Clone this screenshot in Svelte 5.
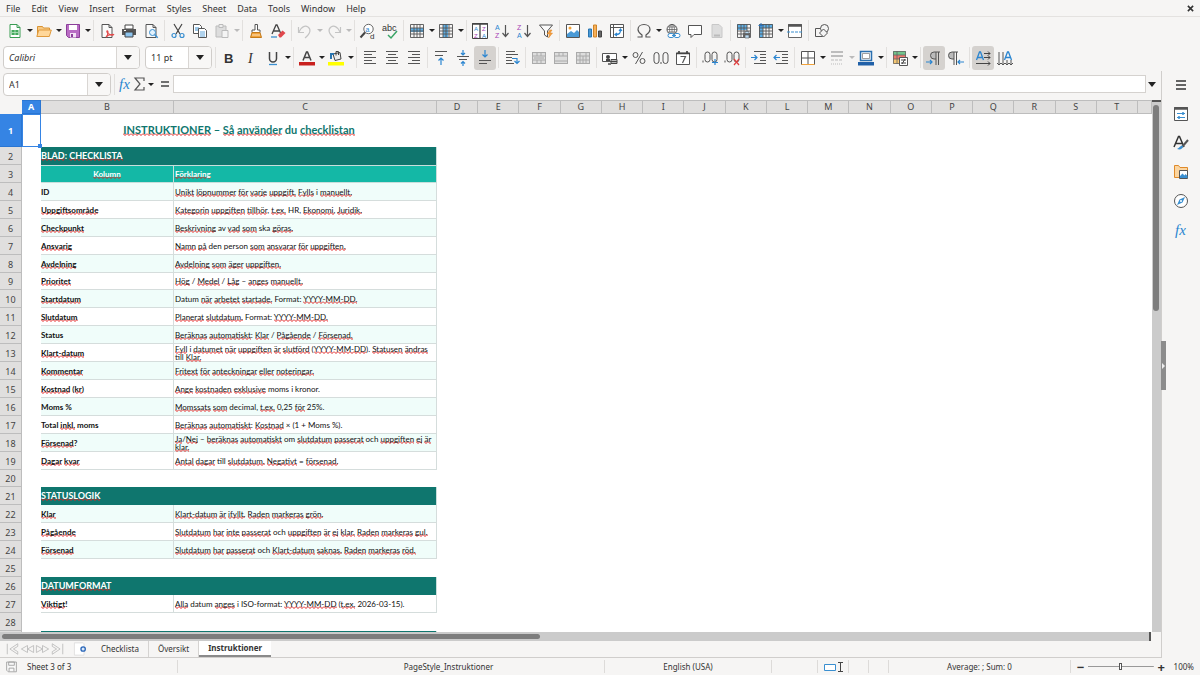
<script>
	const menus = ['File', 'Edit', 'View', 'Insert', 'Format', 'Styles', 'Sheet', 'Data', 'Tools', 'Window', 'Help'];

	const page = '<path d="M3 1.500h7l3 3v10H3z" fill="#fafafa" stroke="#555"/><path d="M10 1.500v3h3" fill="none" stroke="#555"/>';
	const grid = '<path d="M1.500 1.500h13v13h-13zM1.500 5h13M1.500 8h13M1.500 11h13M5 1.500v13M8 1.500v13M11 1.500v13" fill="none" stroke="#555" stroke-width=".9"/>';
	const mergeBase = '<rect x="1.500" y="2.500" width="13" height="11" fill="#ddd" stroke="#aaa"/>';
	const pilcrow = '<path d="M8 2a3.500 3.500 0 0 0 0 7h2V2z" fill="#bbb"/><path d="M14 2H8a3.500 3.500 0 0 0 0 7h2V2M10 9v6M12.500 2v13" fill="none" stroke="#555"/>';

	const icons = {
		new: '<path d="M3 1.500h7l3 3v10H3z" fill="#fff" stroke="#3a9c53"/><path d="M10 1.500v3h3" fill="none" stroke="#3a9c53"/><path d="M4.500 7h7v5h-7z" fill="#43aa5c"/><path d="M5 9.500h6M8 7v5" stroke="#c9edcf" stroke-width=".7"/>',
		open: '<path d="M1.500 13V3.500h5l1 1.500h6v2" fill="#f7c982" stroke="#d99333"/><path d="M.8 13.500l2-6.500h12.500l-2 6.500z" fill="#ffd79a" stroke="#e09a3d"/>',
		save: '<path d="M1.500 1.500h13v13h-11l-2-2z" fill="#b96cc4" stroke="#8b3f99"/><path d="M4 2h8v5H4z" fill="#fff"/><path d="M5 10h6v4.500H5z" fill="#f3e3f5"/><path d="M6 11h2v3H6z" fill="#8b3f99"/>',
		pdf: page + '<path d="M7 14c3-3 2-7 1-6s3 5 6 4-4-1-7 2" fill="none" stroke="#e24a4a" stroke-width="1.200"/>',
		print: '<path d="M4 2h8v4H4z" fill="#fff" stroke="#444"/><path d="M1 6h14v6H1z" fill="#555"/><path d="M4 9h8v5H4z" fill="#8dc4ee" stroke="#444"/><path d="M3 7.500h2" stroke="#fff"/>',
		preview: page + '<circle cx="9.500" cy="9.500" r="3" fill="#e3f2fd" stroke="#3a8fd0"/><path d="M11.700 11.700l3 3" stroke="#3a8fd0" stroke-width="1.500"/>',
		cut: '<path d="M4 1l6 10M12 1L6 11" stroke="#444" stroke-width="1.200"/><circle cx="4" cy="12.500" r="2" fill="none" stroke="#3a8fd0" stroke-width="1.200"/><circle cx="12" cy="12.500" r="2" fill="none" stroke="#3a8fd0" stroke-width="1.200"/>',
		copy: '<path d="M1.500 1.500h6l2 2v7h-8z" fill="#fff" stroke="#555"/><path d="M3 5h4M3 7h4" stroke="#3a8fd0"/><path d="M6.500 5.500h6l2 2v7h-8z" fill="#fff" stroke="#555"/><path d="M8 9h5M8 11h5M8 13h5" stroke="#3a8fd0" stroke-width=".8"/>',
		paste: '<path d="M2 3h10v11H2z" fill="#ddd" stroke="#bbb"/><path d="M5 1.500h4v3H5z" fill="#eee" stroke="#bbb"/><path d="M8 7.500h6v7H8z" fill="#f4f4f4" stroke="#bbb"/>',
		brush: '<path d="M7 1.500h2.500V7H12v2.500H4V7h3z" fill="#fff" stroke="#555"/><path d="M4 9.500h8l1.500 5h-11z" fill="#f2a33a" stroke="#c47a1a"/><path d="M4 12h8" stroke="#fff" stroke-width=".7"/>',
		clear: '<path d="M2 11L6 2h1l4 9M3.500 8h6" fill="none" stroke="#444" stroke-width="1.300"/><path d="M1 14h6" stroke="#3a8fd0" stroke-width="1.300"/><path d="M8 12l4.500-4.500 3 2.500-4.500 4.500h-1.500z" fill="#e0474c"/>',
		undo: '<path d="M1.500 4v5.500h5.500M2 9c2-5 6-7 9-5s3 6-3 11" fill="none" stroke="#c4c4c4" stroke-width="1.200"/>',
		redo: '<path d="M14.500 4v5.500H9M14 9c-2-5-6-7-9-5s-3 6 3 11" fill="none" stroke="#c4c4c4" stroke-width="1.200"/>',
		find: '<circle cx="8.500" cy="6" r="4.700" fill="#fff" stroke="#666"/><path d="M5 9.500l-4.500 5" stroke="#444" stroke-width="2"/><text x="5.500" y="8.500" font-size="7" fill="#2a85d0">a</text><text x="10" y="15.500" font-size="8" fill="#333">d</text>',
		spell: '<text x="0" y="8" font-size="9" fill="#333">abc</text><path d="M6 12l3 3 6-7" fill="none" stroke="#3aa566" stroke-width="1.500"/>',
		row: '<path d="M1 5h14v4H1z" fill="#5eafe6"/>' + grid,
		col: '<path d="M5 1h5v14H5z" fill="#5eafe6"/>' + grid,
		autofilter: '<path d="M.5 .5h15v15H.5z" fill="#fff" stroke="#444"/><path d="M0 1h16M8 1v14" stroke="#444" stroke-width="1.300"/><text x="2" y="8" font-size="6" fill="#2a85d0">A</text><text x="10" y="8" font-size="6" fill="#a63fb5">Z</text><text x="2" y="15" font-size="6" fill="#a63fb5">Z</text><text x="10" y="15" font-size="6" fill="#2a85d0">A</text>',
		asc: '<text x="1" y="7" font-size="7" fill="#2a85d0">A</text><text x="1" y="15" font-size="7" fill="#a63fb5">Z</text><path d="M11.500 2v11M8.500 10l3 3.500 3-3.500" fill="none" stroke="#555" stroke-width="1.200"/>',
		desc: '<text x="1" y="7" font-size="7" fill="#a63fb5">Z</text><text x="1" y="15" font-size="7" fill="#2a85d0">A</text><path d="M11.500 2v11M8.500 10l3 3.500 3-3.500" fill="none" stroke="#555" stroke-width="1.200"/>',
		filter: '<path d="M1.500 2h13L9.500 8v6l-3-2V8z" fill="#fafafa" stroke="#555"/><path d="M12 7l-3 4h2.500l-1 4 4-5H12l2-3z" fill="#f5a040" stroke="#dd8020" stroke-width=".5"/>',
		image: '<path d="M1.500 1.500h13v13h-13z" fill="#fff" stroke="#555"/><path d="M2 14v-3l4-3 3 2 3-3 2 2v5z" fill="#4a9ad6"/><circle cx="5" cy="5" r="1.500" fill="#f2a33a"/>',
		chart: '<path d="M1.500 6h3v8h-3z" fill="#4a9ad6" stroke="#2a75b0"/><path d="M6.500 2h3v12h-3z" fill="#f6b05a" stroke="#cf8427"/><path d="M11.500 8h3v6h-3z" fill="#666" stroke="#444"/>',
		pivot: '<path d="M1.500 1.500h13v13h-13zM1.500 4.500h13M4.500 1.500v13" fill="#fff" stroke="#555"/><path d="M6.500 11.500c4 0 5-1 5-5M10 8l1.500-2L13 8M8 10l-2 1.500L8 13" fill="none" stroke="#2a85d0" stroke-width="1.200"/>',
		omega: '<path d="M1.500 14H6v-2C3 10 2 8.500 2 6.500 2 3.500 4.500 1.500 8 1.500s6 2 6 5c0 2-1 3.500-4 5.500v2h4.500" fill="none" stroke="#555" stroke-width="1.200"/>',
		link: '<circle cx="7" cy="6.500" r="5" fill="#fff" stroke="#555"/><path d="M2 6.500h10M7 1.500v10M3 4h8M3 9h8" stroke="#555" stroke-width=".7"/><ellipse cx="7" cy="6.500" rx="2.400" ry="5" fill="none" stroke="#555" stroke-width=".7"/><rect x="3" y="10.500" width="6" height="4" rx="2" fill="#fff" stroke="#3a8fd0"/><rect x="9" y="10.500" width="6" height="4" rx="2" fill="#fff" stroke="#3a8fd0"/><path d="M7 12.500h4" stroke="#3a8fd0"/>',
		comment: '<path d="M1.500 2.500h13v9H7L4 14.500v-3H1.500z" fill="#fff" stroke="#555"/>',
		header: '<path d="M3 1.500h7l3 3v10H3z" fill="#ddd" stroke="#c8c8c8"/><path d="M5 12.500h6" stroke="#bbb" stroke-width="2"/>',
		printArea: '<path d="M1 1h10v6H1z" fill="#5eafe6"/>' + grid + '<path d="M7 10h8v4H7z" fill="#666"/><path d="M9 8.500h4v2H9zM9 12h4v3H9z" fill="#bcdcf4" stroke="#555" stroke-width=".6"/>',
		freeze: '<path d="M1 1h14v4H5v10H1z" fill="#5eafe6"/>' + grid + '<path d="M3 0v5M.5 2.500h5" stroke="#2a75c0"/>',
		split: '<path d="M1.500 1.500h13v13h-13z" fill="#fff" stroke="#666"/><path d="M1 2.500h14" stroke="#555" stroke-width="2.500"/><path d="M0 9h16" stroke="#3a8fd0" stroke-dasharray="3 1"/>',
		shapes: '<path d="M1.500 5.500h7v8h-7z" fill="none" stroke="#555"/><circle cx="10.500" cy="5.500" r="4" fill="#f4f4f4" stroke="#555"/><path d="M9.500 6l4 4-4 4-4-4z" fill="#f4f4f4" stroke="#555"/>',
		bold: '<text x="3" y="13" font-size="13" font-weight="700" fill="#333">B</text>',
		italic: '<text x="5" y="13" font-size="14" font-style="italic" font-family="Liberation Serif" fill="#333">I</text>',
		underline: '<path d="M4.500 2v6.500a3.500 3.500 0 0 0 7 0V2" fill="none" stroke="#444" stroke-width="1.500"/><path d="M4 14.500h8" stroke="#3a8fd0" stroke-width="1.300"/>',
		fontColor: '<path d="M4 10.500L7.500 2h1l3.500 8.500M5.500 7.500h5" fill="none" stroke="#444" stroke-width="1.500"/><path d="M0 12h16v3.500H0z" fill="#c9211e"/>',
		fill: '<path d="M5 4l7-1.500 1 6.500-6 1.500z" fill="#eee" stroke="#444"/><path d="M8 5.500V1.500h2.500V5" fill="none" stroke="#444"/><path d="M3 9V4h3" fill="none" stroke="#2a75b0" stroke-width="2"/><path d="M0 12h16v3.500H0z" fill="#ff0"/>',
		left: '<path d="M2 1.500h12M2 4.500h8M2 7.500h12M2 10.500h8M2 13.500h12" stroke="#555"/>',
		center: '<path d="M2 1.500h12M4 4.500h8M2 7.500h12M4 10.500h8M2 13.500h12" stroke="#555"/>',
		right: '<path d="M2 1.500h12M6 4.500h8M2 7.500h12M6 10.500h8M2 13.500h12" stroke="#555"/>',
		top: '<path d="M2 1.500h12M2 5.500h8" stroke="#555"/><path d="M8 15V8M5.500 10.500L8 8l2.500 2.500" fill="none" stroke="#2a85d0" stroke-width="1.200"/>',
		middle: '<path d="M2 6.500h12M4 9.500h8" stroke="#555"/><path d="M8 0v5M6 3l2 2 2-2M8 16v-4.500M6 13.500l2-2 2 2" fill="none" stroke="#2a85d0" stroke-width="1.200"/>',
		bottom: '<path d="M2 10.500h12M2 13.500h8" stroke="#555"/><path d="M8 0v7M5.500 4.500L8 7l2.500-2.500" fill="none" stroke="#2a85d0" stroke-width="1.200"/>',
		wrap: '<path d="M2 1.500h9M2 4.500h12M2 7.500h6M2 10.500h6M2 13.500h8" stroke="#555"/><path d="M8 8.500h5v4M10.500 11l2.500 2.500 2.500-2.500" fill="none" stroke="#2a85d0" stroke-width="1.200"/>',
		merge: mergeBase + '<path d="M1 6h14M1 10h14M6 2v4M10 2v4M6 10v4M10 10v4M3 8h10" stroke="#aaa"/>',
		mergeCells: mergeBase + '<path d="M1 6h14M1 11h14M6 2v4M10 2v4" stroke="#aaa"/>',
		unmerge: mergeBase + '<path d="M1 6h14M1 10h14M5 2v12M8 6v8M11 2v12" stroke="#aaa"/>',
		currency: '<path d="M.5 3.500h14v8H.5z" fill="#fff" stroke="#555"/><circle cx="6" cy="7" r="2" fill="#444"/><path d="M4 11v-2h4v2z" fill="#444"/><path d="M9 9.500h6v4H9z" fill="#bbb" stroke="#444"/><path d="M9 11.500h6" stroke="#444"/><path d="M6 14h3" stroke="#777" stroke-width="2"/>',
		percent: '<circle cx="4.500" cy="5" r="2.500" fill="none" stroke="#555"/><circle cx="11.500" cy="11" r="2.500" fill="none" stroke="#555"/><path d="M11.500 2l-7 12" stroke="#555"/>',
		number: '<rect x="1" y="2.500" width="5" height="11" rx="2.500" fill="none" stroke="#555"/><rect x="10" y="2.500" width="5" height="11" rx="2.500" fill="none" stroke="#555"/><path d="M8 12v2" stroke="#555"/>',
		date: '<path d="M1.500 3h13v11.500h-13z" fill="#fff" stroke="#555"/><path d="M1 3.500h14M4 1v3M12 1v3" stroke="#444" stroke-width="1.700"/><path d="M5.500 6.500h5L7.500 13" fill="none" stroke="#555" stroke-width="1.200"/>',
		addDec: '<rect x="3" y="2" width="5" height="10" rx="2.500" fill="none" stroke="#555"/><rect x="10" y="2" width="5" height="10" rx="2.500" fill="none" stroke="#555"/><path d="M1 10.500v2" stroke="#555"/><path d="M13 9v6M10 12.500h6" stroke="#2a85d0" stroke-width="1.200"/>',
		delDec: '<rect x="3" y="2" width="5" height="10" rx="2.500" fill="none" stroke="#555"/><rect x="10" y="2" width="5" height="10" rx="2.500" fill="none" stroke="#555"/><path d="M1 10.500v2" stroke="#555"/><path d="M10 9l5 6M15 9l-5 6" stroke="#e04040" stroke-width="1.200"/>',
		indent: '<path d="M3 1.500h12M9 4.500h6M9 7.500h6M9 10.500h6M3 13.500h12" stroke="#555"/><path d="M0 7.500h6M3.500 5L6 7.500 3.500 10" fill="none" stroke="#2a85d0" stroke-width="1.200"/>',
		outdent: '<path d="M3 1.500h12M9 4.500h6M9 7.500h6M9 10.500h6M3 13.500h12" stroke="#555"/><path d="M7 7.500H1M3.500 5L1 7.500 3.500 10" fill="none" stroke="#2a85d0" stroke-width="1.200"/>',
		borders: '<path d="M1.500 1.500h13v13h-13z" fill="#fff" stroke="#555"/><path d="M8 1.500v13M1.500 8h13" stroke="#555"/><path d="M1.500 14.500h13" stroke="#f2a33a"/>',
		lineStyle: '<path d="M2 2h12M2 6h12" stroke="#aaa" stroke-width="1.500"/><path d="M2 10h12" stroke="#bbb" stroke-dasharray="3 1"/><path d="M2 14h12" stroke="#bbb" stroke-dasharray="1 1"/>',
		borderColor: '<path d="M2.500 1.500h11v9h-11z" fill="#f4f8fc" stroke="#2a6fae" stroke-width="1.500"/><path d="M4.500 3.500h7v5h-7z" fill="#fff" stroke="#777" stroke-width=".7"/><path d="M0 12h16v3.500H0z" fill="#2060a8"/>',
		conditional: '<path d="M1 1h13v4H1z" fill="#72c48c"/><path d="M1 5h13v4H1z" fill="#ef7a6e"/><path d="M1 9h13v5H1z" fill="#f7c873"/><path d="M1.500 1.500h12v12h-12zM1 5h13M1 9h13M5 1v13" fill="none" stroke="#666" stroke-width=".8"/><path d="M7.500 7.500h8v8h-8z" fill="#fff" stroke="#555"/><path d="M9 10h5M9 13h5M13 9l-3 5" stroke="#444"/>',
		ltr: pilcrow + '<path d="M0 12h6M4 10l2 2-2 2" fill="none" stroke="#2a85d0" stroke-width="1.200"/>',
		rtl: '<g transform="translate(-4)">' + pilcrow + '</g><path d="M16 12h-6M12 10l-2 2 2 2" fill="none" stroke="#2a85d0" stroke-width="1.200"/>',
		horizontal: '<path d="M1.500 10L4.500 2h1l3 8M2.500 7.500h5" fill="none" stroke="#2a85d0" stroke-width="1.300"/><path d="M9 3.500h6M9 7.500h6M1 13.500h14M13 1.500l2 2-2 2M13 5.500l2 2-2 2M13 11.500l2 2-2 2" fill="none" stroke="#444"/>',
		vertical: '<path d="M7.500 10L10.500 2h1l3 8M8.500 7.500h5" fill="none" stroke="#2a85d0" stroke-width="1.300"/><path d="M2 2v13M6 2v13M10 10v5M14 10v5M0 13l2 2 2-2M4 13l2 2 2-2M8 13l2 2 2-2M12 13l2 2 2-2" fill="none" stroke="#555"/>',
		fx: '<text x="2" y="13" font-size="15" font-style="italic" font-family="Liberation Serif" fill="#2a85d0">fx</text>',
		sum: '<path d="M12 5V2H3l5 6-5 6h9v-3" fill="none" stroke="#555" stroke-width="1.200"/>',
		equals: '<path d="M4 6h8M4 10h8" stroke="#444" stroke-width="1.700"/>',
		menu: '<path d="M3 4h10M3 8h10M3 12h10" stroke="#333" stroke-width="1.500"/>',
		properties: '<path d="M1.500 1.500h13v13h-13z" fill="#fff" stroke="#555"/><path d="M1 2.500h14" stroke="#555" stroke-width="2.500"/><path d="M4 7.500h8M4 11.500h8" stroke="#3a8fd0"/><path d="M10 6v3M6 10v3" stroke="#3a8fd0" stroke-width="1.500"/>',
		styles: '<path d="M1 12L5.500 1.500h1L11 12M2.500 8.500h7" fill="none" stroke="#333" stroke-width="1.500"/><path d="M15 5l-6 7" stroke="#555" stroke-width="2"/><path d="M4 14c3 1 6 0 6-3-3-1-3 2-6 3z" fill="#3a8fd0"/>',
		gallery: '<path d="M1.500 13.500v-12h4l1.500 2h7.500v10z" fill="#fbd5a0" stroke="#df8a2a"/><path d="M6.500 6.500h8v8h-8z" fill="#fff" stroke="#555"/><path d="M7 14v-2l2.500-2.500 2 2 1-1.500 2 2v2z" fill="#3a8fd0"/>',
		navigator: '<circle cx="8" cy="8" r="6.500" fill="#fff" stroke="#555"/><path d="M12 4l-2.500 5.500L4 12l2.500-5.500z" fill="#3a8fd0"/><circle cx="8" cy="8" r="1" fill="#fff"/>',
		first: '<path d="M2 2v12M14 2L5 8l9 6v-3L9 8l5-3z" fill="none" stroke="#bbb"/>',
		prev: '<path d="M8 4L1 8l7 4zM15 4L8 8l7 4z" fill="none" stroke="#bbb"/>',
		next: '<path d="M8 4l7 4-7 4zM1 4l7 4-7 4z" fill="none" stroke="#bbb"/>',
		last: '<path d="M14 2v12M2 2l9 6-9 6v-3l5-3-5-3z" fill="none" stroke="#bbb"/>',
		addSheet: '<path d="M1 1h10l1 1v13H1z" fill="#fff" stroke="#ddd"/><circle cx="11" cy="8" r="2.500" fill="#dce9fa" stroke="#2a66b8" stroke-width="1.500"/>',
		saved: '<path d="M2 2.500h12v12H4l-2-2z" fill="#f8f8f8" stroke="#999"/><path d="M4.500 2.500h7v4h-7zM5 14v-4h6v4" fill="none" stroke="#999"/>'
	};

	// "|" is a separator, a trailing "+" adds a drop-down arrow
	const standardBar =
		'new+ open+ save+ | pdf print preview | cut copy paste+ | brush clear | undo+ redo+ | find spell | row+ col+ | autofilter asc desc filter | image chart pivot | omega+ link comment header | printArea freeze+ split | shapes'.split(' ');
	const formatBar =
		'| bold italic underline+ | fontColor+ fill+ | left center right | top middle bottom | wrap | merge mergeCells unmerge | currency+ percent number date | addDec delDec | indent outdent | borders+ lineStyle+ borderColor+ | conditional+ | ltr rtl | horizontal vertical'.split(' ');
	const pressed = ['bottom', 'ltr', 'horizontal'];
	const disabled = ['paste', 'undo', 'redo', 'header', 'lineStyle', 'merge', 'mergeCells', 'unmerge'];
	const panels = ['menu', 'properties', 'styles', 'gallery', 'navigator', 'fx'];

	const columns = 'DEFGHIJKLMNOPQRST'.split('');

	const rows = [
		{ kind: 'title', b: 'INSTRUKTIONER – Så använder du checklistan', height: 33 },
		{ kind: 'section', b: 'BLAD: CHECKLISTA' },
		{ kind: 'head', b: 'Kolumn', c: 'Förklaring' },
		{ kind: 'data', b: 'ID', c: 'Unikt löpnummer för varje uppgift. Fylls i manuellt.', tint: true },
		{ kind: 'data', b: 'Uppgiftsområde', c: 'Kategorin uppgiften tillhör, t.ex. HR, Ekonomi, Juridik.' },
		{ kind: 'data', b: 'Checkpunkt', c: 'Beskrivning av vad som ska göras.', tint: true },
		{ kind: 'data', b: 'Ansvarig', c: 'Namn på den person som ansvarar för uppgiften.' },
		{ kind: 'data', b: 'Avdelning', c: 'Avdelning som äger uppgiften.', tint: true },
		{ kind: 'data', b: 'Prioritet', c: 'Hög / Medel / Låg – anges manuellt.', height: 17 },
		{ kind: 'data', b: 'Startdatum', c: 'Datum när arbetet startade. Format: YYYY-MM-DD.', tint: true },
		{ kind: 'data', b: 'Slutdatum', c: 'Planerat slutdatum. Format: YYYY-MM-DD.' },
		{ kind: 'data', b: 'Status', c: 'Beräknas automatiskt: Klar / Pågående / Försenad.', tint: true },
		{ kind: 'data', b: 'Klart-datum', c: 'Fyll i datumet när uppgiften är slutförd (YYYY-MM-DD). Statusen ändras till Klar.' },
		{ kind: 'data', b: 'Kommentar', c: 'Fritext för anteckningar eller noteringar.', tint: true },
		{ kind: 'data', b: 'Kostnad (kr)', c: 'Ange kostnaden exklusive moms i kronor.' },
		{ kind: 'data', b: 'Moms %', c: 'Momssats som decimal, t.ex. 0,25 för 25%.', tint: true },
		{ kind: 'data', b: 'Total inkl. moms', c: 'Beräknas automatiskt: Kostnad × (1 + Moms %).' },
		{ kind: 'data', b: 'Försenad?', c: 'Ja/Nej – beräknas automatiskt om slutdatum passerat och uppgiften ej är klar.', tint: true },
		{ kind: 'data', b: 'Dagar kvar', c: 'Antal dagar till slutdatum. Negativt = försenad.' },
		{ kind: 'blank', height: 17 },
		{ kind: 'section', b: 'STATUSLOGIK' },
		{ kind: 'data', b: 'Klar', c: 'Klart-datum är ifyllt. Raden markeras grön.', tint: true },
		{ kind: 'data', b: 'Pågående', c: 'Slutdatum har inte passerat och uppgiften är ej klar. Raden markeras gul.' },
		{ kind: 'data', b: 'Försenad', c: 'Slutdatum har passerat och Klart-datum saknas. Raden markeras röd.', tint: true },
		{ kind: 'blank' },
		{ kind: 'section', b: 'DATUMFORMAT' },
		{ kind: 'data', b: 'Viktigt!', c: 'Alla datum anges i ISO-format: YYYY-MM-DD (t.ex. 2026-03-15).' },
		{ kind: 'blank' },
		{ kind: 'section', b: '', partial: true }
	];

	// words the spell checker accepts
	const known = 'id hr i av ska den person datum format status till moms decimal total och om kronor du iso-format'.split(' ');

	function spell(text) {
		return text
			.split(/(\p{L}[\p{L}.-]*)/u)
			.filter((t) => t !== '')
			.map((t) => ({
				text: t,
				bad: /^\p{L}/u.test(t) && !known.includes(t.toLowerCase().replace(/\.$/, ''))
			}));
	}

	let font = $state('Calibri');
	let size = $state('11 pt');
	let cell = $state('A1');
	let formula = $state('');
	let zoom = $state(50);
	let sheet = $state('Instruktioner');
</script>

{#snippet icon(name)}
	<svg class="icon" viewBox="0 0 16 16" aria-hidden="true">{@html icons[name]}</svg>
{/snippet}

{#snippet tools(items)}
	{#each items as item}
		{#if item === '|'}
			<span class="sep"></span>
		{:else}
			{@const name = item.replace('+', '')}
			<button class="tool" class:pressed={pressed.includes(name)} aria-label={name} disabled={disabled.includes(name)}>
				{@render icon(name)}
			</button>
			{#if item.endsWith('+')}
				<button class="caret" aria-label="{name} options" disabled={disabled.includes(name)}></button>
			{/if}
		{/if}
	{/each}
{/snippet}

{#snippet words(text)}
	{#each spell(text) as w}{#if w.bad}<span class="bad">{w.text}</span>{:else}{w.text}{/if}{/each}
{/snippet}

<div class="app">
	<nav class="menubar">
		{#each menus as m}
			<button>{m}</button>
		{/each}
		<button class="close" aria-label="Close document">
			<svg viewBox="0 0 8 8"><path d="M1 1l6 6M7 1L1 7" stroke="#333" stroke-width="1.8" /></svg>
		</button>
	</nav>

	<div class="toolbar">{@render tools(standardBar)}</div>

	<div class="toolbar format">
		<div class="combo font">
			<input aria-label="Font name" bind:value={font} />
			<button aria-label="Font list"></button>
		</div>
		<div class="combo size">
			<input aria-label="Font size" bind:value={size} />
			<button aria-label="Size list"></button>
		</div>
		{@render tools(formatBar)}
	</div>

	<div class="main">
		<div class="work">
			<div class="formula-bar">
				<div class="combo name">
					<input aria-label="Name box" bind:value={cell} />
					<button aria-label="Named ranges"></button>
				</div>
				<span class="sep"></span>
				<button class="small" aria-label="Function wizard">{@render icon('fx')}</button>
				<button class="small" aria-label="Sum">{@render icon('sum')}</button>
				<button class="caret" aria-label="Sum options"></button>
				<button class="small" aria-label="Formula">{@render icon('equals')}</button>
				<input class="formula" aria-label="Input line" bind:value={formula} />
				<button class="expand" aria-label="Expand formula bar"></button>
			</div>

			<div class="sheet">
				<div class="cells">
					<table>
						<colgroup>
							<col class="w-num" /><col class="w-a" /><col class="w-b" /><col class="w-c" />
							{#each columns as c}<col />{/each}
							<col class="w-last" />
						</colgroup>
						<thead>
							<tr>
								<th class="corner"></th>
								<th class="sel">A</th>
								<th>B</th>
								<th>C</th>
								{#each columns as c}<th>{c}</th>{/each}
								<th></th>
							</tr>
						</thead>
						<tbody>
							{#each rows as r, i}
								<tr class={r.kind} class:tint={r.tint} style:height="{r.height ?? 18}px">
									<th class:sel={i === 0}>{r.partial ? '' : i + 1}</th>
									<td class:cursor={i === 0}></td>
									{#if r.kind === 'title' || r.kind === 'section'}
										<td class="b" colspan="2">{@render words(r.b)}</td>
									{:else if r.kind === 'blank'}
										<td></td><td></td>
									{:else}
										<td class="b">{@render words(r.b)}</td>
										<td class="c">{@render words(r.c)}</td>
									{/if}
									<td colspan="18"></td>
								</tr>
							{/each}
						</tbody>
					</table>
				</div>
				<div class="vscroll"><div class="thumb"></div></div>
			</div>

			<div class="hscroll">
				<div class="track"><div class="thumb"></div></div>
			</div>

			<div class="tabs">
				<div class="nav">
					{#each ['first', 'prev', 'next', 'last'] as n}
						<button aria-label="{n} sheet" disabled>{@render icon(n)}</button>
					{/each}
				</div>
				<button class="add" aria-label="Add sheet">{@render icon('addSheet')}</button>
				{#each ['Checklista', 'Översikt', 'Instruktioner'] as name}
					<button class="tab" class:active={sheet === name} onclick={() => (sheet = name)}>{name}</button>
				{/each}
			</div>
		</div>

		<aside class="sidebar">
			<div class="grip"></div>
			{#each panels as p}
				<button aria-label={p}>{@render icon(p)}</button>
			{/each}
		</aside>
	</div>

	<footer class="status">
		<div class="doc">{@render icon('saved')}<span>Sheet 3 of 3</span></div>
		<div class="style">PageStyle_Instruktioner</div>
		<div>English (USA)</div>
		<div></div>
		<div>
			<svg viewBox="0 0 22 12" width="22" height="12">
				<path d="M2.5 3.500h11v6h-11z" fill="#fff" stroke="#3a8fd0" />
				<path d="M16 1.500h5M18.500 1.500v9M16 10.500h5" stroke="#444" />
			</svg>
		</div>
		<div></div>
		<div></div>
		<div>Average: ; Sum: 0</div>
		<div class="zoom">
			<button aria-label="Zoom out">−</button>
			<input type="range" aria-label="Zoom" min="0" max="100" bind:value={zoom} />
			<button aria-label="Zoom in">+</button>
			<span class="percent">100%</span>
		</div>
	</footer>
</div>

<style>
	:global(body) {
		margin: 0;
	}
	.app {
		display: flex;
		flex-direction: column;
		height: 100vh;
		overflow: hidden;
		background: #f6f5f4;
		color: #333;
		font: 9px 'Noto Sans', sans-serif;
	}
	button {
		margin: 0;
		padding: 0;
		border: 0;
		background: none;
		color: inherit;
		font: inherit;
	}
	input {
		min-width: 0;
		box-sizing: border-box;
		font: inherit;
		color: inherit;
	}
	.icon {
		display: block;
		flex: none;
		width: 16px;
		height: 16px;
		overflow: visible;
		font-family: 'Liberation Sans', sans-serif;
	}

	.menubar {
		display: flex;
		align-items: center;
		gap: 11px;
		height: 16px;
		padding: 0 6px;
		border-bottom: 1px solid #e4e2e0;
	}
	.close {
		margin-left: auto;
	}
	.close svg {
		display: block;
		width: 7px;
		height: 7px;
	}

	.toolbar {
		display: flex;
		align-items: center;
		height: 27px;
		padding-left: 4px;
	}
	.tool {
		display: flex;
		align-items: center;
		justify-content: center;
		flex: none;
		width: 22px;
		height: 24px;
		border-radius: 3px;
	}
	.tool.pressed {
		background: #d5d2cf;
	}
	.sep {
		flex: none;
		width: 1px;
		height: 21px;
		margin: 0 2px;
		background: #e2e0de;
	}
	.caret {
		flex: none;
		width: 7px;
		height: 22px;
	}
	.caret::before,
	.expand::before,
	.combo button::before {
		content: '';
		display: block;
		width: 0;
		margin: 0 auto;
		border: 3px solid transparent;
		border-top-color: #222;
		border-bottom: 0;
	}
	.caret:disabled::before {
		border-top-color: #bbb;
	}
	.expand::before,
	.combo button::before {
		border-width: 5px 4px 0;
	}
	.format {
		padding-left: 3px;
	}
	.combo {
		display: flex;
		flex: none;
		box-sizing: border-box;
		height: 23px;
		overflow: hidden;
		border: 1px solid #d0cdca;
		border-radius: 4px;
		background: #fff;
	}
	.combo input {
		flex: 1;
		border: 0;
		padding: 0 5px;
		background: none;
	}
	.combo button {
		width: 23px;
		border-left: 1px solid #d9d6d3;
		background: #f8f7f6;
	}
	.font {
		width: 137px;
		margin-right: 5px;
	}
	.font input {
		font-style: italic;
	}
	.size {
		width: 67px;
		margin-right: 1px;
	}
	.name {
		width: 108px;
	}

	.main {
		display: flex;
		flex: 1;
		min-height: 0;
	}
	.work {
		display: flex;
		flex: 1;
		flex-direction: column;
		min-width: 0;
	}
	.formula-bar {
		display: flex;
		align-items: center;
		height: 24px;
		padding: 1px 4px 4px 3px;
	}
	.formula-bar .sep {
		margin: 0 2px 0 3px;
	}
	.small {
		display: flex;
		justify-content: center;
		width: 15px;
	}
	.caret + .small {
		margin: 0 1px 0 3px;
	}
	.formula {
		flex: 1;
		height: 18px;
		border: 1px solid #d5d2cf;
		background: #fff;
	}
	.expand {
		width: 11px;
	}

	.sheet {
		display: flex;
		flex: 1;
		min-height: 0;
	}
	.cells {
		flex: 1;
		min-width: 0;
		overflow: hidden;
		background: #fff;
	}
	table {
		width: 100%;
		table-layout: fixed;
		border-collapse: separate;
		border-spacing: 0;
	}
	.w-num {
		width: 22px;
	}
	.w-a {
		width: 19px;
	}
	.w-b {
		width: 133px;
	}
	.w-c {
		width: 263px;
	}
	.w-last {
		width: 14px;
	}
	th,
	td {
		box-sizing: border-box;
		padding: 0;
		line-height: 8px;
	}
	th {
		border: solid #bdbdbd;
		border-width: 0 1px 1px 0;
		background: #e0dfde;
		color: #444;
		font-weight: 400;
	}
	tbody th {
		padding-top: 2px;
	}
	thead th {
		height: 14px;
		border-top: 1px solid #bdbdbd;
	}
	th.corner {
		border: 0;
		background: #f6f5f4;
	}
	th.sel {
		border-color: #2a76d2;
		background: #3584e4;
		color: #fff;
		font-weight: 700;
	}
	td {
		color: #111;
		font-family: Lato, sans-serif;
		font-size: 8px;
	}
	.cursor {
		position: relative;
		border: 1px solid #3584e4;
	}
	.cursor::after {
		content: '';
		position: absolute;
		right: -2px;
		bottom: -2px;
		width: 4px;
		height: 4px;
		background: #3584e4;
	}
	.title .b {
		padding-bottom: 2px;
		color: #0f766e;
		font-size: 11px;
		font-weight: 700;
		line-height: 14px;
		text-align: center;
	}
	.section .b {
		border-right: 1px solid #c8dedb;
		background: #0f766e;
		color: #fff;
		font-size: 9px;
		font-weight: 700;
	}
	.head .b,
	.head .c {
		border: solid #c8dedb;
		border-width: 1px 1px 1px 0;
		background: #14b8a6;
		color: #fff;
		font-weight: 700;
	}
	.head .b {
		text-align: center;
	}
	.head .c,
	.data .c {
		padding-left: 1px;
	}
	.data .b,
	.data .c {
		border: solid #d5dddc;
		border-width: 0 1px 1px 0;
	}
	.data .b {
		font-weight: 700;
	}
	.tint .b,
	.tint .c {
		background: #f0fdfa;
	}
	.bad {
		background: url("data:image/svg+xml,%3Csvg xmlns='http://www.w3.org/2000/svg' width='4' height='3'%3E%3Cpath d='M0 .5l2 2 2-2' fill='none' stroke='%23e02020'/%3E%3C/svg%3E") left bottom / 4px 3px repeat-x;
	}

	.vscroll {
		width: 9px;
		padding: 3px 1px 0;
		background: #cbcbcb;
		border-top: 2px solid #555;
		box-sizing: border-box;
	}
	.vscroll .thumb {
		width: 6px;
		height: 39%;
		border-radius: 3px;
		background: #7d7d7d;
	}
	.hscroll {
		display: flex;
		height: 9px;
		padding-right: 10px;
	}
	.track {
		flex: 1;
		padding: 2px;
		border-right: 2px solid #555;
		background: #cbcbcb;
		box-sizing: border-box;
	}
	.hscroll .thumb {
		width: 47%;
		height: 5px;
		border-radius: 3px;
		background: #7d7d7d;
	}

	.tabs {
		display: flex;
		align-items: stretch;
		height: 16px;
		border-bottom: 1px solid #d0cecc;
		font-size: 8px;
	}
	.nav {
		display: flex;
		align-items: center;
		width: 73px;
		padding-left: 5px;
		box-sizing: border-box;
	}
	.nav .icon,
	.add .icon {
		width: 15px;
		height: 14px;
	}
	.add {
		width: 19px;
	}
	.tab {
		padding: 0 9px 1px;
		border-right: 1px solid #d5d3d1;
		line-height: 14px;
	}
	.tab.active {
		padding-bottom: 0;
		border-right: 0;
		border-bottom: 2px solid #8a8a8a;
		background: #fff;
		font-weight: 700;
	}

	.sidebar {
		position: relative;
		display: flex;
		flex-direction: column;
		align-items: center;
		gap: 5px;
		width: 38px;
		padding-top: 2px;
		border-left: 1px solid #d0cecc;
	}
	.sidebar button {
		display: flex;
		align-items: center;
		justify-content: center;
		width: 24px;
		height: 24px;
	}
	.grip {
		position: absolute;
		top: 46%;
		left: -1px;
		width: 5px;
		height: 49px;
		background: #8c8c8c;
	}
	.grip::after {
		content: '';
		position: absolute;
		top: 22px;
		left: 1px;
		border: 3px solid transparent;
		border-left-color: #eee;
		border-right: 0;
	}

	.status {
		display: grid;
		grid-template-columns: 178fr 427fr 167fr 46fr 31px 20px 20px 182fr 129px;
		align-items: center;
		height: 17px;
		font-size: 8px;
	}
	.status > div {
		display: flex;
		align-items: center;
		justify-content: center;
		box-sizing: border-box;
		height: 13px;
		border-right: 1px solid #dddbd9;
	}
	.status .doc {
		justify-content: flex-start;
		gap: 9px;
		padding-left: 5px;
	}
	.doc .icon {
		width: 13px;
		height: 13px;
	}
	.status .style {
		padding-left: 115px;
	}
	.status .zoom {
		gap: 2px;
		padding: 0 6px 0 4px;
		border: 0;
	}
	.zoom button {
		width: 11px;
		font-size: 13px;
		font-weight: 700;
		line-height: 12px;
	}
	.zoom input {
		flex: 1;
		height: 12px;
		margin: 0;
		appearance: none;
		background: linear-gradient(#999, #999) center / 100% 1px no-repeat;
	}
	.zoom input::-webkit-slider-thumb {
		appearance: none;
		box-sizing: border-box;
		width: 3px;
		height: 7px;
		border: 1px solid #555;
		background: #fff;
	}
	.percent {
		margin-left: 5px;
	}
</style>
